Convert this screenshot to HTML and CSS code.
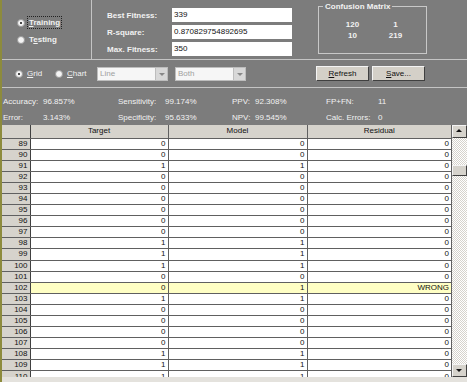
FILE: index.html
```html
<!DOCTYPE html>
<html lang="en">
<head>
  <meta charset="UTF-8" />
  <title>Model Results</title>
  <link rel="stylesheet" href="styles.css">
</head>
<body>
  <div class="app">
    <div class="top">
      <div class="modes">
        <label class="radio"><span class="dot on"></span><span class="focus"><u>T</u>raining</span></label>
        <label class="radio"><span class="dot"></span><span>T<u>e</u>sting</span></label>
      </div>
      <div class="fitness">
        <div class="field"><span class="lbl">Best Fitness:</span><span class="box">339</span></div>
        <div class="field"><span class="lbl">R-square:</span><span class="box">0.870829754892695</span></div>
        <div class="field"><span class="lbl">Max. Fitness:</span><span class="box">350</span></div>
      </div>
      <fieldset class="matrix">
        <legend>Confusion Matrix</legend>
        <div class="cells">
          <span>120</span><span>1</span>
          <span>10</span><span>219</span>
        </div>
      </fieldset>
    </div>

    <div class="toolbar">
      <label class="radio"><span class="dot on"></span><span><u>G</u>rid</span></label>
      <label class="radio"><span class="dot"></span><span><u>C</u>hart</span></label>
      <div class="combo"><span>Line</span><i></i></div>
      <div class="combo"><span>Both</span><i></i></div>
      <div class="buttons">
        <button><u>R</u>efresh</button>
        <button><u>S</u>ave...</button>
      </div>
    </div>

    <div class="stats">
      <span>Accuracy:</span><span>96.857%</span>
      <span>Sensitivity:</span><span>99.174%</span>
      <span>PPV:</span><span>92.308%</span>
      <span>FP+FN:</span><span>11</span>
      <span>Error:</span><span>3.143%</span>
      <span>Specificity:</span><span>95.633%</span>
      <span>NPV:</span><span>99.545%</span>
      <span>Calc. Errors:</span><span>0</span>
    </div>

    <div class="gridwrap">
      <table class="grid">
        <thead>
          <tr><th class="rh"></th><th class="c1">Target</th><th class="c2">Model</th><th class="c3">Residual</th></tr>
        </thead>
        <tbody id="rows"></tbody>
      </table>
      <div class="scroll">
        <div class="arrow up"></div>
        <div class="track"><div class="thumb"></div></div>
        <div class="arrow down"></div>
      </div>
    </div>
    <div class="status"></div>
  </div>

  <script>
    const data = [
      [89, 0, 0, 0], [90, 0, 0, 0], [91, 1, 1, 0], [92, 0, 0, 0], [93, 0, 0, 0],
      [94, 0, 0, 0], [95, 0, 0, 0], [96, 0, 0, 0], [97, 0, 0, 0], [98, 1, 1, 0],
      [99, 1, 1, 0], [100, 1, 1, 0], [101, 0, 0, 0], [102, 0, 1, 'WRONG'], [103, 1, 1, 0],
      [104, 0, 0, 0], [105, 0, 0, 0], [106, 0, 0, 0], [107, 0, 0, 0], [108, 1, 1, 0],
      [109, 1, 1, 0], [110, 1, 1, 0]
    ];
    const rows = document.getElementById('rows');
    data.forEach(r => {
      const tr = document.createElement('tr');
      if (r[3] === 'WRONG') tr.classList.add('wrong');
      tr.innerHTML = `<td class="rh">${r[0]}</td><td>${r[1]}</td><td>${r[2]}</td><td>${r[3]}</td>`;
      rows.appendChild(tr);
    });
  </script>
</body>
</html>
```

FILE: styles.css
```css
body {
  margin: 0;
  background: #7c7c7c;
  font-family: 'Liberation Sans', Arial, sans-serif;
  font-size: 8px;
  color: #f2f2f2;
}

.app {
  width: 465px;
  height: 382px;
  border-left: 2px solid #8d8b3c;
  overflow: hidden;
  display: flex;
  flex-direction: column;
}

/* top panel */
.top {
  display: flex;
  height: 59px;
  flex: none;
  border-bottom: 1px solid #c4c4c4;
}

.modes {
  width: 90px;
  border-right: 1px solid #c4c4c4;
  display: flex;
  flex-direction: column;
  gap: 6px;
  padding: 17px 0 0 15px;
  box-sizing: border-box;
  font-weight: bold;
}

.radio {
  display: flex;
  align-items: center;
  gap: 4px;
  height: 11px;
}

.dot {
  width: 8px;
  height: 8px;
  border-radius: 50%;
  background: #f4f4f4;
  border: 1px solid #9a9a9a;
  box-sizing: border-box;
  position: relative;
}

.dot.on::after {
  content: '';
  position: absolute;
  left: 2px;
  top: 2px;
  width: 2px;
  height: 2px;
  border-radius: 50%;
  background: #111;
}

.focus {
  outline: 1px dotted #222;
  outline-offset: 1px;
}

.fitness {
  display: flex;
  flex-direction: column;
  gap: 3px;
  padding: 8px 0 0 15px;
  font-weight: bold;
}

.field {
  display: flex;
  align-items: center;
}

.lbl {
  width: 65px;
}

.box {
  width: 120px;
  height: 14px;
  line-height: 14px;
  background: #fff;
  color: #111;
  font-weight: normal;
  padding-left: 2px;
  box-sizing: border-box;
}

.matrix {
  margin: 2px 0 5px 26px;
  padding: 0;
  width: 109px;
  border: 1px solid #c8c8c8;
  box-sizing: border-box;
}

.matrix legend {
  font-weight: bold;
  padding: 0 2px;
  margin-left: 4px;
}

.cells {
  display: grid;
  grid-template-columns: 46px 40px;
  justify-content: center;
  text-align: center;
  font-weight: bold;
  margin-top: 8px;
  line-height: 11px;
}

/* toolbar */
.toolbar {
  display: flex;
  align-items: center;
  height: 27px;
  flex: none;
  border-bottom: 1px solid #c4c4c4;
  padding-left: 13px;
}

.toolbar .radio {
  width: 40px;
}

.toolbar .radio + .radio {
  width: 42px;
}

.combo {
  width: 71px;
  height: 14px;
  margin-right: 7px;
  background: #f6f6f6;
  color: #a0a0a0;
  display: flex;
  align-items: center;
  justify-content: space-between;
  padding-left: 2px;
  box-sizing: border-box;
  border: 1px solid #bdbdbd;
}

.combo i {
  width: 11px;
  height: 12px;
  background: #d8d8d8;
  border-left: 1px solid #bdbdbd;
  position: relative;
}

.combo i::after {
  content: '';
  position: absolute;
  left: 3px;
  top: 5px;
  border: 3px solid transparent;
  border-top: 3px solid #888;
}

.buttons {
  display: flex;
  gap: 3px;
  margin-left: 63px;
}

.buttons button {
  width: 53px;
  height: 15px;
  padding: 0;
  font: inherit;
  color: #111;
  background: #d4d0c8;
  border: 1px solid #f4f4f4;
  border-right-color: #404040;
  border-bottom-color: #404040;
}

/* stats */
.stats {
  display: grid;
  grid-template-columns: 40px 75px 47px 67px 23px 71px 52px 40px;
  grid-auto-rows: 16px;
  align-items: center;
  height: 37px;
  flex: none;
  box-sizing: border-box;
  padding: 5px 0 0 1px;
}

/* grid */
.gridwrap {
  display: flex;
  height: 252px;
  flex: none;
  background: #fff;
  overflow: hidden;
}

.grid {
  border-collapse: collapse;
  table-layout: fixed;
  width: 450px;
  height: fit-content;
  color: #111;
  background: #fff;
}

.grid th,
.grid td {
  box-sizing: border-box;
  border: 1px solid #606060;
  height: 11.1px;
  line-height: 10px;
  padding: 0 2px;
  text-align: right;
  font-weight: normal;
  white-space: nowrap;
  overflow: hidden;
}

.grid th {
  background: #d6d3cc;
  text-align: center;
  height: 13px;
  border-top: none;
}

.grid .rh {
  width: 28px;
  background: #d6d3cc;
  text-align: right;
  border-left: none;
  border-right-color: #404040;
}

.grid .c1 { width: 138px; }
.grid .c2 { width: 139px; }

.grid tr.wrong td:not(.rh) {
  background: #ffffc4;
}

.scroll {
  width: 15px;
  display: flex;
  flex-direction: column;
  background: #f0efec;
}

.arrow {
  height: 13px;
  flex: none;
  background: #d6d3cc;
  border: 1px solid #f4f4f4;
  border-right-color: #404040;
  border-bottom-color: #404040;
  box-sizing: border-box;
  position: relative;
}

.arrow::after {
  content: '';
  position: absolute;
  left: 3px;
  border: 3px solid transparent;
}

.arrow.up::after {
  top: 0;
  border-bottom-color: #111;
}

.arrow.down::after {
  top: 4px;
  border-top-color: #111;
}

.track {
  flex: 1;
  background: repeating-conic-gradient(#ffffff 0 25%, #d6d3cc 0 50%) 0 0 / 2px 2px;
}

.thumb {
  margin-top: 27px;
  height: 11px;
  background: #d6d3cc;
  border: 1px solid #f4f4f4;
  border-right-color: #404040;
  border-bottom-color: #404040;
  box-sizing: border-box;
}

.status {
  flex: 1;
  background: #e4e2dd;
}
```
